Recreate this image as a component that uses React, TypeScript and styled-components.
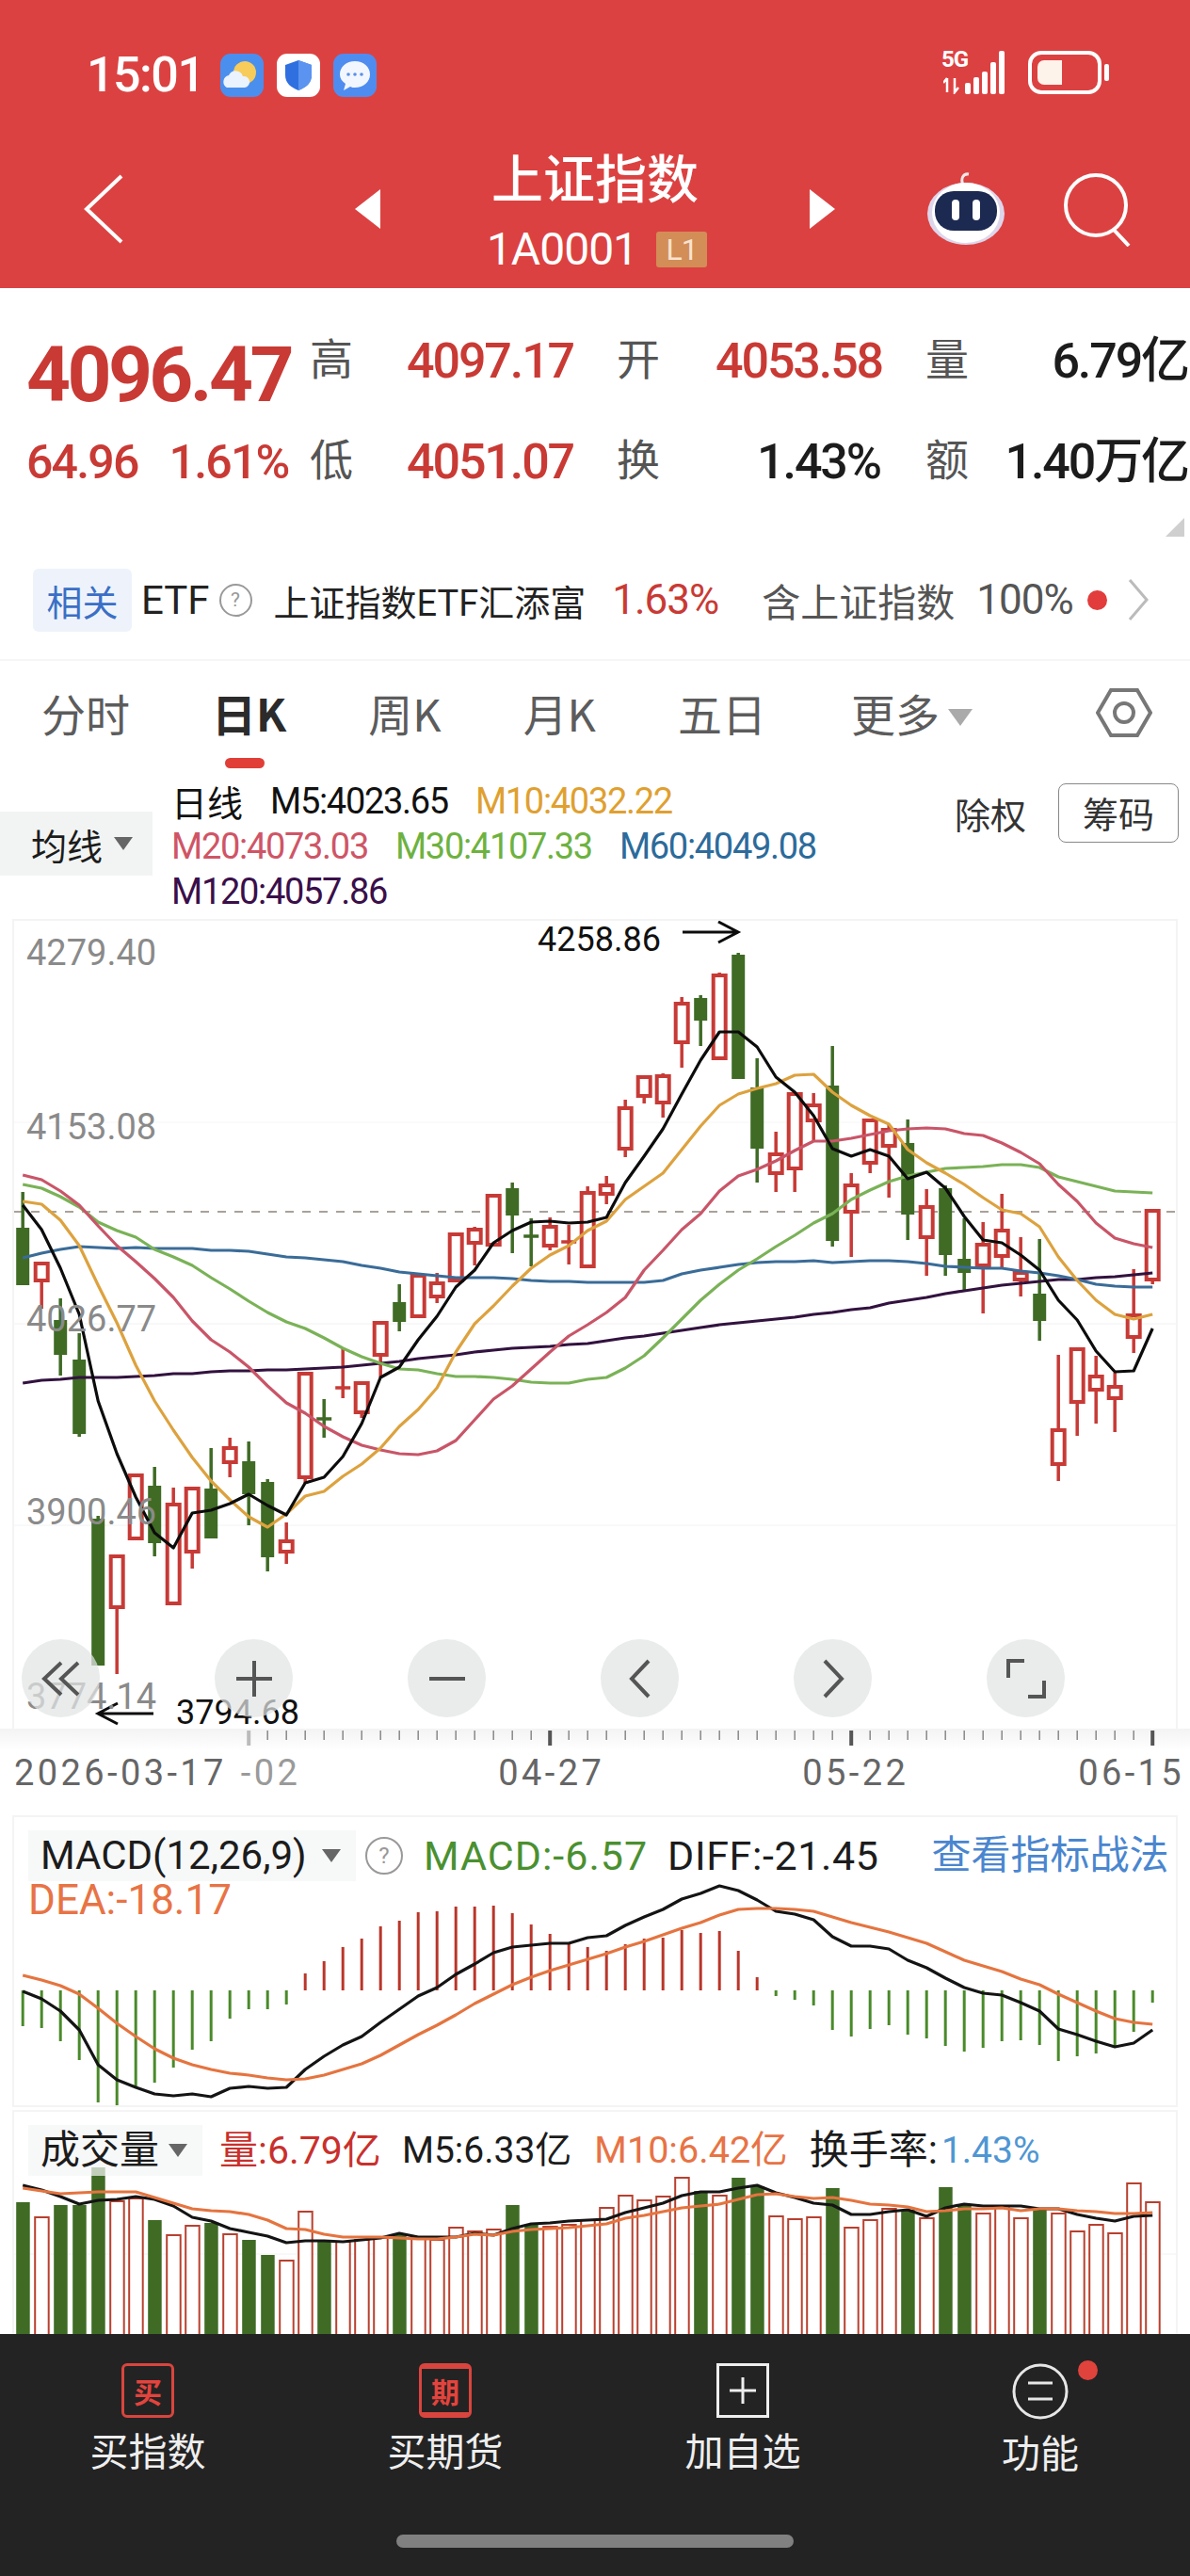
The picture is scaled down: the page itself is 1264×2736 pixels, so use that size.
import React from 'react';
import styled, { createGlobalStyle } from 'styled-components';

const NUM = `Roboto, "Noto Sans CJK SC", sans-serif`;

const RED = '#c73a36';
const GREEN = '#3f6b25';

type Candle = [number, number, number, number, 'r' | 'g'];

// high, body top, body bottom, low
const candles: Candle[] = [
  [1266, 1304, 1365, 1365, 'g'], [1340, 1342, 1360, 1390, 'r'], [1379, 1402, 1439, 1461, 'g'], [1416, 1444, 1523, 1526, 'g'],
  [1610, 1613, 1769, 1769, 'g'], [1653, 1653, 1707, 1778, 'r'], [1567, 1567, 1634, 1634, 'r'], [1558, 1578, 1639, 1653, 'g'],
  [1580, 1598, 1703, 1703, 'r'], [1581, 1581, 1648, 1666, 'r'], [1538, 1581, 1634, 1634, 'g'], [1527, 1538, 1553, 1569, 'r'],
  [1531, 1552, 1587, 1620, 'g'], [1571, 1574, 1654, 1669, 'g'], [1617, 1637, 1648, 1661, 'r'], [1459, 1459, 1569, 1575, 'r'],
  [1486, 1507, 1507, 1527, 'g'], [1432, 1474, 1474, 1485, 'r'], [1467, 1469, 1500, 1506, 'r'], [1405, 1405, 1439, 1463, 'r'],
  [1364, 1383, 1404, 1414, 'g'], [1355, 1355, 1398, 1400, 'r'], [1352, 1363, 1377, 1384, 'r'], [1311, 1311, 1360, 1362, 'r'],
  [1303, 1306, 1320, 1344, 'r'], [1270, 1270, 1322, 1322, 'r'], [1256, 1262, 1291, 1331, 'g'], [1294, 1313, 1313, 1345, 'g'],
  [1293, 1303, 1323, 1328, 'r'], [1301, 1319, 1319, 1343, 'r'], [1260, 1267, 1345, 1345, 'r'], [1249, 1259, 1268, 1279, 'r'],
  [1168, 1177, 1220, 1229, 'r'], [1144, 1144, 1164, 1172, 'r'], [1140, 1143, 1171, 1187, 'r'], [1059, 1066, 1107, 1134, 'r'],
  [1057, 1060, 1084, 1111, 'g'], [1033, 1036, 1124, 1124, 'r'], [1012, 1014, 1146, 1146, 'g'], [1124, 1155, 1220, 1256, 'g'],
  [1202, 1226, 1246, 1266, 'r'], [1162, 1162, 1241, 1266, 'r'], [1161, 1174, 1190, 1212, 'r'], [1111, 1153, 1318, 1324, 'g'],
  [1246, 1259, 1287, 1335, 'r'], [1188, 1190, 1235, 1246, 'r'], [1194, 1200, 1217, 1272, 'r'], [1189, 1214, 1290, 1317, 'g'],
  [1263, 1282, 1314, 1355, 'r'], [1259, 1262, 1333, 1355, 'g'], [1294, 1337, 1352, 1370, 'g'], [1298, 1322, 1344, 1395, 'r'],
  [1268, 1307, 1334, 1347, 'r'], [1314, 1352, 1359, 1377, 'r'], [1316, 1374, 1403, 1424, 'g'], [1439, 1519, 1555, 1573, 'r'],
  [1433, 1433, 1489, 1525, 'r'], [1440, 1462, 1476, 1512, 'r'], [1458, 1473, 1485, 1521, 'r'], [1348, 1397, 1420, 1437, 'r'],
  [1286, 1286, 1359, 1364, 'r'],
];

const ma5 = [1280, 1306, 1347, 1396, 1488, 1544, 1590, 1628, 1644, 1607, 1604, 1597, 1587, 1599, 1609, 1575, 1569, 1547, 1512, 1463, 1452, 1423, 1398, 1367, 1349, 1320, 1307, 1298, 1297, 1299, 1298, 1293, 1256, 1228, 1199, 1162, 1126, 1096, 1096, 1112, 1144, 1160, 1185, 1220, 1228, 1221, 1228, 1252, 1245, 1262, 1292, 1317, 1320, 1333, 1349, 1381, 1402, 1435, 1457, 1456, 1411];
const ma10 = [1276, 1279, 1296, 1323, 1365, 1405, 1450, 1488, 1519, 1548, 1573, 1593, 1611, 1622, 1608, 1589, 1584, 1568, 1555, 1538, 1515, 1497, 1474, 1436, 1406, 1387, 1366, 1347, 1333, 1323, 1307, 1297, 1274, 1260, 1246, 1221, 1196, 1174, 1162, 1156, 1151, 1142, 1141, 1160, 1174, 1185, 1194, 1221, 1235, 1246, 1258, 1272, 1285, 1289, 1303, 1335, 1360, 1381, 1396, 1401, 1396];
const ma20 = [1248, 1253, 1265, 1280, 1302, 1323, 1340, 1358, 1378, 1403, 1423, 1436, 1452, 1472, 1490, 1501, 1515, 1526, 1535, 1540, 1544, 1545, 1541, 1530, 1508, 1486, 1472, 1454, 1436, 1419, 1407, 1394, 1378, 1349, 1328, 1306, 1289, 1265, 1249, 1242, 1233, 1222, 1212, 1212, 1209, 1205, 1201, 1199, 1198, 1199, 1204, 1206, 1214, 1224, 1236, 1258, 1276, 1299, 1315, 1321, 1325];
const ma30 = [1258, 1262, 1271, 1282, 1298, 1307, 1314, 1327, 1335, 1344, 1357, 1369, 1382, 1394, 1404, 1411, 1421, 1432, 1441, 1448, 1454, 1455, 1459, 1462, 1462, 1463, 1465, 1468, 1469, 1469, 1465, 1463, 1453, 1440, 1421, 1401, 1381, 1364, 1349, 1337, 1324, 1312, 1299, 1289, 1274, 1264, 1255, 1249, 1245, 1241, 1240, 1239, 1237, 1237, 1240, 1250, 1255, 1260, 1265, 1266, 1267];
const ma60 = [1336, 1331, 1327, 1324, 1325, 1326, 1325, 1326, 1326, 1326, 1328, 1328, 1329, 1332, 1335, 1336, 1338, 1340, 1344, 1347, 1351, 1353, 1355, 1357, 1357, 1357, 1358, 1360, 1361, 1361, 1362, 1362, 1362, 1362, 1360, 1353, 1349, 1346, 1343, 1341, 1340, 1340, 1339, 1341, 1340, 1339, 1339, 1340, 1342, 1345, 1346, 1347, 1347, 1350, 1352, 1355, 1359, 1364, 1366, 1367, 1367];
const ma120 = [1469, 1466, 1465, 1463, 1463, 1463, 1462, 1461, 1459, 1459, 1457, 1456, 1456, 1455, 1455, 1454, 1453, 1452, 1450, 1448, 1446, 1443, 1441, 1439, 1436, 1434, 1432, 1431, 1430, 1428, 1427, 1424, 1421, 1419, 1416, 1413, 1410, 1407, 1405, 1403, 1401, 1399, 1396, 1394, 1391, 1389, 1384, 1381, 1378, 1374, 1371, 1368, 1365, 1363, 1361, 1359, 1359, 1357, 1356, 1354, 1352];

const macdBars = [2150, 2152, 2166, 2186, 2231, 2234, 2216, 2210, 2194, 2175, 2166, 2142, 2132, 2132, 2127, 2094, 2081, 2066, 2057, 2044, 2038, 2029, 2028, 2023, 2023, 2022, 2030, 2042, 2052, 2063, 2066, 2070, 2063, 2057, 2056, 2048, 2051, 2049, 2070, 2098, 2118, 2122, 2128, 2154, 2161, 2153, 2149, 2159, 2163, 2171, 2177, 2173, 2166, 2165, 2170, 2187, 2182, 2179, 2173, 2156, 2125];
const diff = [2113, 2121, 2134, 2154, 2191, 2207, 2215, 2222, 2224, 2222, 2225, 2216, 2214, 2216, 2215, 2196, 2182, 2170, 2161, 2146, 2132, 2118, 2109, 2095, 2084, 2072, 2066, 2064, 2062, 2062, 2056, 2054, 2043, 2034, 2026, 2015, 2009, 2001, 2006, 2016, 2028, 2031, 2037, 2055, 2065, 2065, 2068, 2080, 2088, 2099, 2109, 2115, 2117, 2125, 2134, 2153, 2159, 2166, 2172, 2168, 2154];
const dea = [2096, 2101, 2107, 2116, 2131, 2147, 2161, 2174, 2184, 2191, 2196, 2200, 2202, 2205, 2207, 2206, 2202, 2196, 2190, 2181, 2170, 2159, 2149, 2138, 2126, 2116, 2106, 2098, 2091, 2085, 2079, 2073, 2066, 2060, 2053, 2046, 2040, 2032, 2026, 2025, 2025, 2026, 2028, 2034, 2040, 2045, 2050, 2056, 2062, 2071, 2080, 2086, 2092, 2100, 2106, 2116, 2125, 2134, 2142, 2146, 2148];

const volumes = [2337, 2353, 2340, 2340, 2300, 2336, 2333, 2356, 2372, 2362, 2359, 2371, 2377, 2393, 2399, 2347, 2379, 2379, 2377, 2375, 2371, 2375, 2377, 2364, 2368, 2366, 2340, 2361, 2363, 2361, 2356, 2343, 2330, 2335, 2331, 2311, 2325, 2330, 2311, 2320, 2352, 2355, 2353, 2322, 2364, 2356, 2344, 2345, 2354, 2321, 2339, 2349, 2341, 2354, 2345, 2349, 2368, 2361, 2370, 2317, 2337];
const volM5 = [2319, 2324, 2331, 2339, 2335, 2334, 2331, 2334, 2341, 2353, 2357, 2365, 2369, 2373, 2380, 2378, 2378, 2379, 2377, 2375, 2370, 2374, 2374, 2374, 2370, 2372, 2365, 2360, 2359, 2357, 2356, 2355, 2348, 2343, 2338, 2330, 2326, 2326, 2322, 2319, 2327, 2332, 2338, 2340, 2350, 2350, 2347, 2345, 2352, 2343, 2339, 2341, 2341, 2341, 2344, 2344, 2350, 2354, 2357, 2352, 2351];
const volM10 = [2322, 2325, 2328, 2327, 2326, 2326, 2326, 2332, 2338, 2344, 2346, 2347, 2350, 2356, 2365, 2366, 2371, 2374, 2374, 2374, 2375, 2376, 2376, 2374, 2371, 2372, 2368, 2366, 2365, 2364, 2362, 2360, 2354, 2351, 2347, 2343, 2341, 2339, 2334, 2329, 2328, 2331, 2333, 2332, 2335, 2339, 2340, 2342, 2347, 2346, 2344, 2344, 2343, 2346, 2344, 2344, 2346, 2347, 2349, 2349, 2348];

const xAt = (i: number) => 24.2 + 20 * i;
const pts = (ys: number[]) => ys.map((y, i) => `${xAt(i).toFixed(1)},${y}`).join(' ');

const GlobalStyle = createGlobalStyle`
  html, body {
    margin: 0;
    background: #fff;
  }
  #root {
    width: 1264px;
    height: 2736px;
    overflow: hidden;
    font-family: "Noto Sans CJK SC", Roboto, sans-serif;
  }
`;

const Page = styled.div`
  width: 1264px;
  height: 2736px;
  display: flex;
  flex-direction: column;
  position: relative;
  overflow: hidden;
`;

/* ---------- red header ---------- */
const Header = styled.header`
  height: 306px;
  flex: none;
  background: #dc4141;
  color: #fff;
`;

const StatusBar = styled.div`
  height: 150px;
  box-sizing: border-box;
  padding: 54px 84px 0 92px;
  display: flex;
  align-items: flex-start;
`;

const Time = styled.span`
  font: 500 52px/52px ${NUM};
  letter-spacing: -1.5px;
  width: 142px;
  white-space: nowrap;
`;

const AppIcons = styled.div`
  display: flex;
  gap: 14px;
  margin-top: 3px;
`;

const StatusRight = styled.div`
  margin-left: auto;
  display: flex;
  gap: 18px;
  align-items: center;
`;

const NetBadge = styled.span`
  position: absolute;
  left: -2px;
  top: -4px;
  font: 700 24px/26px ${NUM};
  letter-spacing: -1px;
`;

const SignalBox = styled.span`
  position: relative;
  width: 72px;
  height: 46px;
`;

const NavBar = styled.div`
  display: grid;
  grid-template-columns: 377px 27px 456px 27px 1fr;
  height: 143px;
  align-items: center;
`;

const BackCell = styled.div`
  padding-left: 88px;
  display: flex;
`;

const TitleBlock = styled.div`
  display: flex;
  flex-direction: column;
  align-items: center;
`;

const Title = styled.div`
  font-size: 55px;
  line-height: 72px;
  font-weight: 500;
`;

const Sub = styled.div`
  margin: 15px 0 0 4px;
  height: 56px;
  display: flex;
  align-items: center;
  gap: 20px;
  font: 400 48px/56px ${NUM};
  letter-spacing: -1px;
`;

const LevelChip = styled.span`
  width: 54px;
  height: 38px;
  background: #d38d57;
  color: #f7e3cf;
  border-radius: 3px;
  font: 400 32px/38px ${NUM};
  text-align: center;
`;

const NavRight = styled.div`
  display: flex;
  padding-left: 96px;
  gap: 60px;
  align-items: center;
`;

/* ---------- quote numbers ---------- */
const QuoteBlock = styled.section`
  height: 284px;
  flex: none;
  box-sizing: border-box;
  padding: 24px 0 0 28px;
  position: relative;
`;

const QuoteGrid = styled.div`
  display: grid;
  grid-template-columns: 301px 103px 223px 105px 175px 48px 77px 202px;
  grid-auto-rows: 107px;
  align-items: center;
`;

const BigPrice = styled.div`
  font: 700 82px/90px ${NUM};
  letter-spacing: -3.6px;
  color: #c93a35;
  padding-top: 28px;
`;

const ChangeRow = styled.div`
  display: flex;
  gap: 33px;
  font: 500 50px/56px ${NUM};
  letter-spacing: -1.8px;
  color: #c93a35;
`;

const StatLabel = styled.span`
  font-size: 46px;
  line-height: 56px;
  color: #555;
  margin-bottom: 12px;
`;

const StatValue = styled.span<{ $up?: boolean; $right?: boolean }>`
  font: 500 52px/56px ${NUM};
  letter-spacing: -2.1px;
  color: ${p => (p.$up ? '#c93a35' : '#1c1c1c')};
  text-align: ${p => (p.$right ? 'right' : 'left')};
  white-space: nowrap;
`;

const CornerMark = styled.div`
  position: absolute;
  right: 6px;
  bottom: 20px;
  width: 20px;
  height: 20px;
  background: #cfcfcf;
  clip-path: polygon(100% 0, 100% 100%, 0 100%);
`;

const RelatedRow = styled.div`
  height: 94px;
  flex: none;
  margin-bottom: 16px;
  display: flex;
  align-items: center;
  padding-left: 35px;
  white-space: nowrap;
`;

const RelatedChip = styled.span`
  width: 105px;
  height: 67px;
  border-radius: 6px;
  background: #eef3fb;
  color: #3b6fc6;
  font-size: 38px;
  line-height: 67px;
  text-align: center;
`;

const RelatedText = styled.span<{ $color?: string; $size?: number; $gap: number; $tight?: boolean }>`
  margin-left: ${p => p.$gap}px;
  color: ${p => p.$color || '#222'};
  font-size: ${p => p.$size || 38}px;
  font-family: ${NUM};
  letter-spacing: ${p => (p.$tight ? '-1px' : '0')};
`;

const HelpDot = styled.span<{ $size: number; $gap: number }>`
  flex: none;
  width: ${p => p.$size}px;
  height: ${p => p.$size}px;
  margin-left: ${p => p.$gap}px;
  box-sizing: border-box;
  border: 2px solid #999;
  border-radius: 50%;
  color: #999;
  font: 400 ${p => Math.round(p.$size * 0.6)}px/${p => p.$size - 4}px ${NUM};
  text-align: center;
`;

const RedDot = styled.span`
  flex: none;
  width: 21px;
  height: 21px;
  margin-left: 15px;
  border-radius: 50%;
  background: #e23c3c;
`;

const Chevron = styled.svg`
  margin-left: 22px;
`;

/* ---------- period tabs ---------- */
const Tabs = styled.nav`
  height: 120px;
  flex: none;
  box-sizing: border-box;
  border-top: 2px solid #f6f6f6;
  padding: 27px 40px 0 44px;
  display: flex;
  align-items: flex-start;
  gap: 87px;
`;

const Tab = styled.span<{ $active?: boolean }>`
  position: relative;
  font-family: "Noto Sans CJK SC", ${NUM};
  font-size: 47px;
  line-height: 56px;
  white-space: nowrap;
  color: ${p => (p.$active ? '#2b2b2b' : '#5c5c5c')};
  font-weight: ${p => (p.$active ? 700 : 400)};

  ${p =>
    p.$active &&
    `&::after {
      content: '';
      position: absolute;
      left: 14px;
      top: 76px;
      width: 42px;
      height: 11px;
      border-radius: 6px;
      background: #e03e37;
    }`}
`;

const TabCaret = styled.span`
  display: inline-block;
  margin-left: 9px;
  border-left: 13px solid transparent;
  border-right: 13px solid transparent;
  border-top: 18px solid #aaa;
  vertical-align: 6px;
`;

const MoreTab = styled(Tab)`
  margin-left: 3px;
`;

const GearBox = styled.span`
  margin-left: auto;
  height: 56px;
  display: flex;
  align-items: center;
`;

/* ---------- moving average legend ---------- */
const LegendBar = styled.div`
  height: 158px;
  flex: none;
  display: flex;
  align-items: flex-start;
`;

const DropChip = styled.span`
  flex: none;
  width: 162px;
  height: 68px;
  margin-top: 42px;
  box-sizing: border-box;
  padding-left: 33px;
  display: flex;
  align-items: center;
  gap: 12px;
  background: #f2f4f3;
  color: #1c1c1c;
  font-size: 38px;
`;

const Caret = styled.span<{ $color?: string }>`
  flex: none;
  border-left: 10px solid transparent;
  border-right: 10px solid transparent;
  border-top: 14px solid ${p => p.$color || '#666'};
`;

const Legend = styled.div`
  width: 700px;
  margin: 7px 0 0 20px;
  display: flex;
  flex-wrap: wrap;
  column-gap: 29px;
  font: 400 38px/48px ${NUM};
  letter-spacing: -1.3px;
`;

const LegendItem = styled.span<{ $color: string; $cjk?: boolean }>`
  color: ${p => p.$color};
  white-space: nowrap;
  ${p => p.$cjk && 'font-family: "Noto Sans CJK SC"; letter-spacing: 0;'}
`;

const LegendTools = styled.div`
  margin: 12px 12px 0 auto;
  display: flex;
  align-items: center;
  gap: 34px;
`;

const PlainTool = styled.span`
  font-size: 38px;
  color: #333;
`;

const ChipTool = styled.span`
  width: 128px;
  height: 63px;
  box-sizing: border-box;
  border: 1px solid #888;
  border-radius: 8px;
  font-size: 38px;
  line-height: 60px;
  text-align: center;
  color: #333;
`;

/* ---------- charts ---------- */
const ChartFrame = styled.div<{ $h: number; $mt?: number }>`
  position: relative;
  flex: none;
  width: 1234px;
  height: ${p => p.$h}px;
  margin: ${p => p.$mt || 0}px 0 0 15px;
  box-shadow: 0 0 0 2px #f4f4f4;

  svg {
    display: block;
  }
`;

const PriceLabel = styled.span<{ $top: number }>`
  position: absolute;
  left: 13px;
  top: ${p => p.$top}px;
  font: 400 38px/44px ${NUM};
  color: #8a8a8a;
`;

const PriceMark = styled.span<{ $left: number; $top: number }>`
  position: absolute;
  left: ${p => p.$left}px;
  top: ${p => p.$top}px;
  font: 400 36px/40px ${NUM};
  color: #111;
`;

const ControlRow = styled.div`
  position: absolute;
  left: 8px;
  top: 763px;
  display: flex;
  gap: 122px;
`;

const RoundButton = styled.span`
  width: 83px;
  height: 83px;
  border-radius: 50%;
  background: rgba(226, 229, 229, 0.72);
  display: flex;
  align-items: center;
  justify-content: center;
`;

const AxisTicks = styled.svg`
  display: block;
  flex: none;
  background: linear-gradient(#f3f3f3, #fff);
`;

const DateRow = styled.div`
  height: 47px;
  flex: none;
  display: flex;
  align-items: center;
  font: 400 38px/47px ${NUM};
  letter-spacing: 3.4px;
  color: #666;
`;

const DateLabel = styled.span<{ $ml: number; $faded?: boolean }>`
  margin-left: ${p => p.$ml}px;
  white-space: nowrap;
  color: ${p => (p.$faded ? '#9a9a9a' : '#666')};
`;

const PanelHead = styled.div`
  position: absolute;
  left: 15px;
  right: 14px;
  top: 14px;
  display: flex;
  align-items: center;
  font: 400 42px/54px ${NUM};
  white-space: nowrap;
`;

const PanelChip = styled.span<{ $w: number }>`
  flex: none;
  width: ${p => p.$w}px;
  height: 54px;
  box-sizing: border-box;
  padding-left: 13px;
  display: flex;
  align-items: center;
  justify-content: space-between;
  padding-right: 16px;
  background: rgba(244, 245, 245, 0.72);
  color: #1c1c1c;
`;

const PanelValue = styled.span<{ $color: string; $ml: number; $size?: number; $ls?: number }>`
  margin-left: ${p => p.$ml}px;
  color: ${p => p.$color};
  font-size: ${p => p.$size || 43}px;
  letter-spacing: ${p => p.$ls || 0}px;
`;

const DeaLabel = styled.span`
  position: absolute;
  left: 15px;
  top: 62px;
  font: 400 44px/52px ${NUM};
  color: #e87345;
`;

/* ---------- bottom bar ---------- */
const Footer = styled.footer`
  position: absolute;
  left: 0;
  right: 0;
  top: 2479px;
  height: 257px;
  background: #232323;
  box-sizing: border-box;
  padding-top: 31px;
`;

const FooterGrid = styled.div`
  display: grid;
  grid-template-columns: repeat(4, 316px);
  margin-left: -1px;
`;

const FooterItem = styled.div`
  display: flex;
  flex-direction: column;
  align-items: center;
  position: relative;
`;

const BuyIcon = styled.span<{ $thick?: boolean }>`
  width: 56px;
  height: 58px;
  box-sizing: border-box;
  border: 3px solid #d9453e;
  ${p => p.$thick && 'border-top-width: 6px; border-bottom-width: 6px;'}
  border-radius: 6px;
  color: #e2443d;
  font-size: 30px;
  font-weight: 700;
  display: flex;
  align-items: center;
  justify-content: center;
`;

const FooterLabel = styled.span`
  margin-top: 5px;
  font-size: 41px;
  line-height: 56px;
  color: #eee;
`;

const FooterBadge = styled.span`
  position: absolute;
  left: 198px;
  top: -3px;
  width: 21px;
  height: 21px;
  border-radius: 50%;
  background: #e0423c;
`;

const HomeIndicator = styled.div`
  width: 422px;
  height: 14px;
  margin: 61px auto 0;
  border-radius: 7px;
  background: #808080;
`;

const CandleMark: React.FC<{ c: Candle; i: number }> = ({ c, i }) => {
  const [high, top, bottom, low, kind] = c;
  const x = xAt(i);
  const color = kind === 'r' ? RED : GREEN;
  if (top === bottom) {
    return (
      <g stroke={color} strokeWidth={3.5}>
        <line x1={x} x2={x} y1={high} y2={low} />
        <line x1={x - 8} x2={x + 8} y1={top} y2={top} />
      </g>
    );
  }
  return (
    <g>
      <line x1={x} x2={x} y1={high} y2={low} stroke={color} strokeWidth={3.5} />
      {kind === 'r' ? (
        <rect x={x - 6.5} y={top} width={13} height={bottom - top} fill="#fff" stroke={color} strokeWidth={4} />
      ) : (
        <rect x={x - 7} y={top} width={14} height={bottom - top} fill={color} />
      )}
    </g>
  );
};

const Line: React.FC<{ ys: number[]; color: string }> = ({ ys, color }) => (
  <polyline points={pts(ys)} fill="none" stroke={color} strokeWidth={3.2} strokeLinejoin="round" />
);

const MainChart = () => (
  <svg width={1234} height={858} viewBox="15 978 1234 858">
    <line x1={15} x2={1249} y1={1192} y2={1192} stroke="#f6f6f6" strokeWidth={1} />
    <line x1={15} x2={1249} y1={1406} y2={1406} stroke="#f2f2f2" strokeWidth={1} />
    <line x1={15} x2={1249} y1={1620} y2={1620} stroke="#f2f2f2" strokeWidth={1} />
    <line x1={15} x2={1249} y1={1287} y2={1287} stroke="#a9a29a" strokeWidth={2} strokeDasharray="9 9" />
    {candles.map((c, i) => <CandleMark key={i} c={c} i={i} />)}
    <Line ys={ma120} color="#32123f" />
    <Line ys={ma60} color="#3a6c98" />
    <Line ys={ma30} color="#7ab257" />
    <Line ys={ma20} color="#c95568" />
    <Line ys={ma10} color="#dda23e" />
    <Line ys={ma5} color="#0c0c0c" />
    <g fill="none" stroke="#0c0c0c" strokeWidth={3}>
      <path d="M725 990H784M763 979l21 11-21 11" />
      <path d="M163 1820H104M125 1809l-21 11 21 11" />
    </g>
  </svg>
);

const MacdChart = () => (
  <svg width={1234} height={306} viewBox="15 1928 1234 306">
    {macdBars.map((y, i) => (
      <line
        key={i}
        x1={xAt(i)}
        x2={xAt(i)}
        y1={2112}
        y2={y}
        stroke={y > 2112 ? '#4a8a2a' : '#b9362a'}
        strokeWidth={3}
      />
    ))}
    <Line ys={diff} color="#141414" />
    <Line ys={dea} color="#e5743f" />
  </svg>
);

const VolumeChart = () => (
  <svg width={1234} height={238} viewBox="15 2241 1234 238">
    <line x1={15} x2={1249} y1={2392} y2={2392} stroke="#f2f2f2" strokeWidth={1} />
    {volumes.map((y, i) =>
      candles[i][4] === 'g' ? (
        <rect key={i} x={xAt(i) - 7} y={y} width={14.5} height={2490 - y} fill={GREEN} />
      ) : (
        <rect key={i} x={xAt(i) - 7} y={y} width={14.5} height={2490 - y} fill="#fff" stroke="#b8402f" strokeWidth={2} />
      )
    )}
    <Line ys={volM5} color="#141414" />
    <Line ys={volM10} color="#e5743f" />
  </svg>
);

const tickIndexes = Array.from({ length: 49 }, (_, k) => k + 12);

const Ticks = () => (
  <AxisTicks width={1264} height={24} viewBox="0 1836 1264 24">
    {tickIndexes.map(i => {
      const major = (i - 12) % 16 === 0;
      return (
        <line
          key={i}
          x1={xAt(i)}
          x2={xAt(i)}
          y1={1838}
          y2={major ? 1854 : 1848}
          stroke={i === 12 ? '#bbb' : major ? '#555' : '#888'}
          strokeWidth={major ? 4 : 1.5}
        />
      );
    })}
  </AxisTicks>
);

const App: React.FC = () => (
  <Page>
    <GlobalStyle />
    <Header>
      <StatusBar>
        <Time>15:01</Time>
        <AppIcons>
          <svg width={46} height={46} viewBox="0 0 46 46">
            <rect width={46} height={46} rx={11} fill="#4a8fee" />
            <circle cx={26} cy={20} r={12} fill="#f7cc5a" />
            <path d="M7 36a7 7 0 0 1 2-13 8 8 0 0 1 15 1 6 6 0 0 1 2 12z" fill="#eaf3fe" />
          </svg>
          <svg width={46} height={46} viewBox="0 0 46 46">
            <rect width={46} height={46} rx={11} fill="#fff" />
            <path d="M23 7l14 5v11c0 8-6 13-14 16-8-3-14-8-14-16V12z" fill="#2f6fe0" />
            <path d="M23 7l14 5v11c0 8-6 13-14 16z" fill="#5a94f0" />
          </svg>
          <svg width={46} height={46} viewBox="0 0 46 46">
            <rect width={46} height={46} rx={11} fill="#4f8cf0" />
            <path d="M23 8c9 0 16 6 16 14s-7 14-16 14c-2 0-3 0-5-1l-7 4 2-7c-4-3-6-6-6-10 0-8 7-14 16-14z" fill="#f2f7ff" />
            <g fill="#5a8fe8">
              <circle cx={16} cy={22} r={1.8} />
              <circle cx={23} cy={22} r={1.8} />
              <circle cx={30} cy={22} r={1.8} />
            </g>
          </svg>
        </AppIcons>
        <StatusRight>
          <SignalBox>
            <NetBadge>5G</NetBadge>
            <svg width={72} height={46} viewBox="0 0 72 46">
              <path d="M4 29v15M0 34l4-5M12 29v15l4-5" stroke="#fff" strokeWidth={2.5} fill="none" />
              <g fill="#fff">
                <rect x={23} y={34} width={6} height={12} rx={2} />
                <rect x={32} y={28} width={6} height={18} rx={2} />
                <rect x={41} y={22} width={6} height={24} rx={2} />
                <rect x={50} y={12} width={6} height={34} rx={2} />
                <rect x={59} y={0} width={6} height={46} rx={2} />
              </g>
            </svg>
          </SignalBox>
          <svg width={88} height={46} viewBox="0 0 88 46">
            <rect x={2} y={2} width={74} height={42} rx={12} fill="none" stroke="#fff" strokeWidth={4} />
            <path d="M10 17a7 7 0 0 1 7-7h19v26H17a7 7 0 0 1-7-7z" fill="#fdf3ea" />
            <rect x={81} y={14} width={5} height={18} rx={2} fill="#fff" />
          </svg>
        </StatusRight>
      </StatusBar>
      <NavBar>
        <BackCell>
          <svg width={44} height={74} viewBox="0 0 44 74">
            <path d="M41 2L4 37l37 35" fill="none" stroke="#fff" strokeWidth={4} />
          </svg>
        </BackCell>
        <svg width={27} height={42} viewBox="0 0 27 42"><path d="M27 0v42L0 21z" fill="#fff" /></svg>
        <TitleBlock>
          <Title>上证指数</Title>
          <Sub>1A0001<LevelChip>L1</LevelChip></Sub>
        </TitleBlock>
        <svg width={27} height={42} viewBox="0 0 27 42"><path d="M0 0v42l27-21z" fill="#fff" /></svg>
        <NavRight>
          <svg width={86} height={80} viewBox="0 0 86 80">
            <path d="M40 14c-3-6 0-12 6-11" fill="none" stroke="#f1e6e8" strokeWidth={3} />
            <ellipse cx={43} cy={45} rx={41} ry={33} fill="#ddd6ea" />
            <ellipse cx={43} cy={44} rx={36} ry={32} fill="#fff" />
            <rect x={10} y={21} width={66} height={42} rx={20} fill="#1c2a52" />
            <rect x={28} y={30} width={8} height={22} rx={4} fill="#fff" />
            <rect x={50} y={30} width={8} height={22} rx={4} fill="#fff" />
          </svg>
          <svg width={76} height={80} viewBox="0 0 76 80">
            <circle cx={35} cy={36} r={32} fill="none" stroke="#fff" strokeWidth={4} />
            <path d="M54 62l16 17" fill="none" stroke="#fff" strokeWidth={4} />
          </svg>
        </NavRight>
      </NavBar>
    </Header>

    <QuoteBlock>
      <QuoteGrid>
        <BigPrice>4096.47</BigPrice>
        <StatLabel>高</StatLabel>
        <StatValue $up>4097.17</StatValue>
        <StatLabel>开</StatLabel>
        <StatValue $up $right>4053.58</StatValue>
        <span />
        <StatLabel>量</StatLabel>
        <StatValue $right>6.79亿</StatValue>

        <ChangeRow><span>64.96</span><span>1.61%</span></ChangeRow>
        <StatLabel>低</StatLabel>
        <StatValue $up>4051.07</StatValue>
        <StatLabel>换</StatLabel>
        <StatValue $right>1.43%</StatValue>
        <span />
        <StatLabel>额</StatLabel>
        <StatValue $right>1.40万亿</StatValue>
      </QuoteGrid>
      <CornerMark />
    </QuoteBlock>

    <RelatedRow>
      <RelatedChip>相关</RelatedChip>
      <RelatedText $gap={10} $size={42}>ETF</RelatedText>
      <HelpDot $size={35} $gap={10}>?</HelpDot>
      <RelatedText $gap={23}>上证指数ETF汇添富</RelatedText>
      <RelatedText $gap={28} $color="#c93a35" $size={44} $tight>1.63%</RelatedText>
      <RelatedText $gap={46} $color="#555" $size={41}>含上证指数</RelatedText>
      <RelatedText $gap={23} $color="#555" $size={44} $tight>100%</RelatedText>
      <RedDot />
      <Chevron width={22} height={46} viewBox="0 0 22 46">
        <path d="M2 2l18 21L2 44" fill="none" stroke="#bbb" strokeWidth={3} />
      </Chevron>
    </RelatedRow>

    <Tabs>
      <Tab>分时</Tab>
      <Tab $active>日K</Tab>
      <Tab>周K</Tab>
      <Tab>月K</Tab>
      <Tab>五日</Tab>
      <MoreTab>更多<TabCaret /></MoreTab>
      <GearBox>
        <svg width={60} height={56} viewBox="0 0 60 56">
          <path d="M16 4h28l14 24-14 24H16L2 28z" fill="none" stroke="#777" strokeWidth={4} />
          <circle cx={30} cy={28} r={10} fill="none" stroke="#777" strokeWidth={4} />
        </svg>
      </GearBox>
    </Tabs>

    <LegendBar>
      <DropChip>均线<Caret /></DropChip>
      <Legend>
        <LegendItem $color="#111" $cjk>日线</LegendItem>
        <LegendItem $color="#111">M5:4023.65</LegendItem>
        <LegendItem $color="#dfa030">M10:4032.22</LegendItem>
        <LegendItem $color="#cf5566">M20:4073.03</LegendItem>
        <LegendItem $color="#6db240">M30:4107.33</LegendItem>
        <LegendItem $color="#2c6b9b">M60:4049.08</LegendItem>
        <LegendItem $color="#3a0f4a">M120:4057.86</LegendItem>
      </Legend>
      <LegendTools>
        <PlainTool>除权</PlainTool>
        <ChipTool>筹码</ChipTool>
      </LegendTools>
    </LegendBar>

    <ChartFrame $h={858}>
      <MainChart />
      <PriceLabel $top={12}>4279.40</PriceLabel>
      <PriceLabel $top={197}>4153.08</PriceLabel>
      <PriceLabel $top={401}>4026.77</PriceLabel>
      <PriceLabel $top={606}>3900.46</PriceLabel>
      <PriceLabel $top={802}>3774.14</PriceLabel>
      <PriceMark $left={556} $top={0}>4258.86</PriceMark>
      <PriceMark $left={172} $top={821}>3794.68</PriceMark>
      <ControlRow>
        <RoundButton>
          <svg width={44} height={40} viewBox="0 0 44 40">
            <path d="M22 3L4 20l18 17M40 3L22 20l18 17" fill="none" stroke="#555" strokeWidth={4} />
          </svg>
        </RoundButton>
        <RoundButton>
          <svg width={40} height={40} viewBox="0 0 40 40">
            <path d="M20 1v38M1 20h38" fill="none" stroke="#555" strokeWidth={4} />
          </svg>
        </RoundButton>
        <RoundButton>
          <svg width={40} height={40} viewBox="0 0 40 40">
            <path d="M1 20h38" fill="none" stroke="#555" strokeWidth={4} />
          </svg>
        </RoundButton>
        <RoundButton>
          <svg width={24} height={44} viewBox="0 0 24 44">
            <path d="M21 3L3 22l18 19" fill="none" stroke="#555" strokeWidth={4} />
          </svg>
        </RoundButton>
        <RoundButton>
          <svg width={24} height={44} viewBox="0 0 24 44">
            <path d="M3 3l18 19L3 41" fill="none" stroke="#555" strokeWidth={4} />
          </svg>
        </RoundButton>
        <RoundButton>
          <svg width={44} height={44} viewBox="0 0 44 44">
            <path d="M20 3H3v18M41 24v17H24" fill="none" stroke="#555" strokeWidth={4} />
          </svg>
        </RoundButton>
      </ControlRow>
    </ChartFrame>

    <Ticks />
    <DateRow>
      <DateLabel $ml={15}>2026-03-17</DateLabel>
      <DateLabel $ml={15} $faded>-02</DateLabel>
      <DateLabel $ml={210}>04-27</DateLabel>
      <DateLabel $ml={210}>05-22</DateLabel>
      <DateLabel $ml={180}>06-15</DateLabel>
    </DateRow>

    <ChartFrame $h={306} $mt={23}>
      <MacdChart />
      <PanelHead>
        <PanelChip $w={348}>MACD(12,26,9)<Caret /></PanelChip>
        <HelpDot $size={40} $gap={10}>?</HelpDot>
        <PanelValue $color="#4a9030" $ml={22} $ls={1}>MACD:-6.57</PanelValue>
        <PanelValue $color="#1c1c1c" $ml={21} $ls={0.6}>DIFF:-21.45</PanelValue>
        <PanelValue $color="#4a86cf" $ml={56} $size={42}>查看指标战法</PanelValue>
      </PanelHead>
      <DeaLabel>DEA:-18.17</DeaLabel>
    </ChartFrame>

    <ChartFrame $h={238} $mt={7}>
      <VolumeChart />
      <PanelHead>
        <PanelChip $w={185}>成交量<Caret /></PanelChip>
        <PanelValue $color="#c9302c" $ml={18} $size={41}>量:6.79亿</PanelValue>
        <PanelValue $color="#1c1c1c" $ml={22} $size={39}>M5:6.33亿</PanelValue>
        <PanelValue $color="#e87345" $ml={24} $size={39.6}>M10:6.42亿</PanelValue>
        <PanelValue $color="#1c1c1c" $ml={23} $size={42}>换手率:</PanelValue>
        <PanelValue $color="#4f96d3" $ml={4} $size={39}>1.43%</PanelValue>
      </PanelHead>
    </ChartFrame>

    <Footer>
      <FooterGrid>
        <FooterItem>
          <BuyIcon>买</BuyIcon>
          <FooterLabel>买指数</FooterLabel>
        </FooterItem>
        <FooterItem>
          <BuyIcon $thick>期</BuyIcon>
          <FooterLabel>买期货</FooterLabel>
        </FooterItem>
        <FooterItem>
          <svg width={56} height={58} viewBox="0 0 56 58">
            <path d="M1.5 1.5h53v55h-53z" fill="none" stroke="#eee" strokeWidth={3} />
            <path d="M28 15v28M14 29h28" fill="none" stroke="#eee" strokeWidth={3} />
          </svg>
          <FooterLabel>加自选</FooterLabel>
        </FooterItem>
        <FooterItem>
          <svg width={60} height={60} viewBox="0 0 60 60">
            <circle cx={30} cy={30} r={28} fill="none" stroke="#e6e6e6" strokeWidth={3} />
            <path d="M17 21h26M17 38h26" fill="none" stroke="#e6e6e6" strokeWidth={3} />
          </svg>
          <FooterLabel>功能</FooterLabel>
          <FooterBadge />
        </FooterItem>
      </FooterGrid>
      <HomeIndicator />
    </Footer>
  </Page>
);

export default App;
